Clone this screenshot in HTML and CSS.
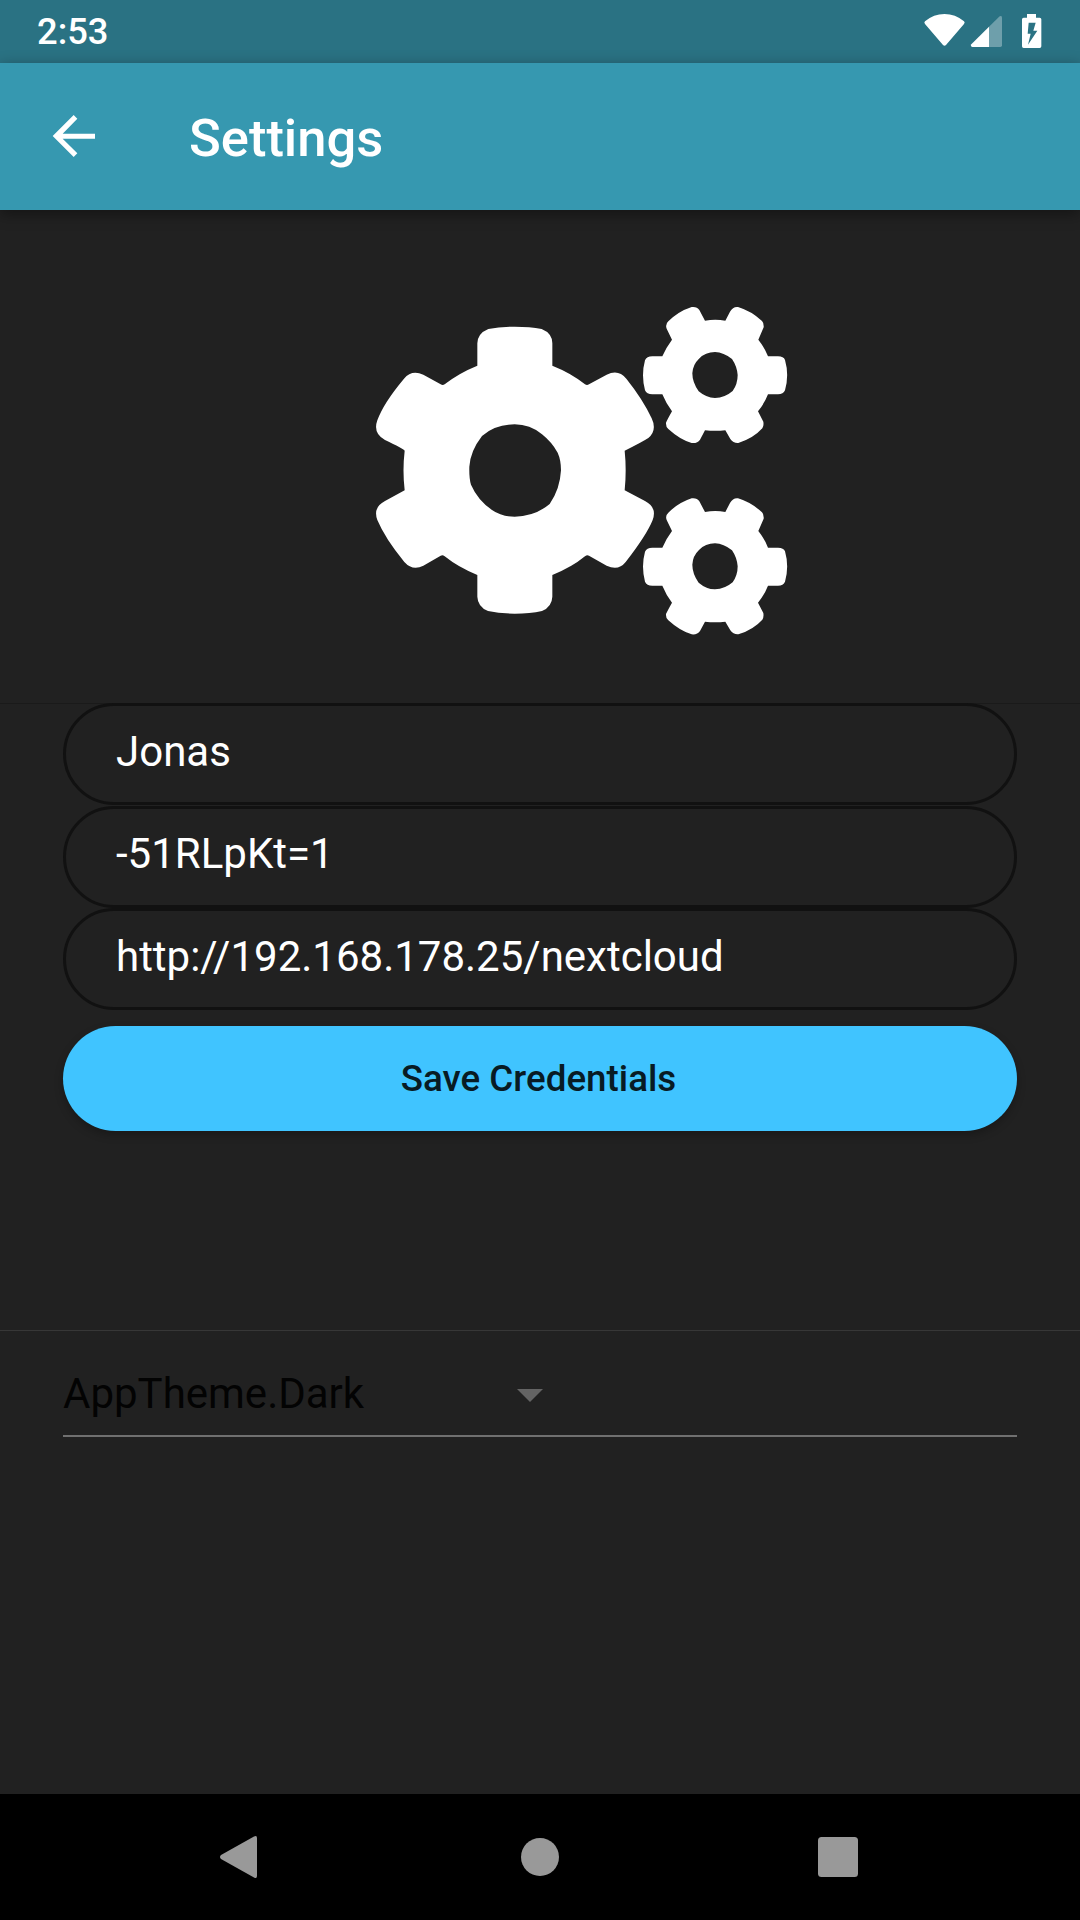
FILE: index.html
```html
<!DOCTYPE html>
<html lang="en">
<head>
<meta charset="utf-8">
<title>Settings</title>
<link rel="stylesheet" href="styles.css">
</head>
<body>
<div class="screen">
  <div class="status-bar">
    <span class="clock">2:53</span>
    <svg class="status-icons" viewBox="0 0 540 189" aria-hidden="true">
      <path fill="#fff" d="M75 64Q101 42 133.500 42Q166 42 192 64Q196 68 192 72L138 135Q133.500 140 129 135L75 72Q71 68 75 64Z"/>
      <path fill="#fff" fill-opacity=".32" d="M267 80L299 49Q306 45 306 53V136Q306 141 301 141H267Z"/>
      <path fill="#fff" d="M267 80V141H217Q210 139 214 133Z"/>
      <path fill="#fff" fill-rule="evenodd" d="M381 42H408V53H419Q424 53 424 58V139Q424 144 419 144H371Q366 144 366 139V58Q366 53 371 53H381ZM386 68L383 101H392L384 134L412 92H400L407 68Z"/>
    </svg>
  </div>
  <header class="app-bar">
    <svg class="back" viewBox="0 0 126 126" aria-hidden="true"><path fill="#fff" d="M126 56H29L73 11L62 0L-1 63L62 126L73 115L29 71H126Z"/></svg>
    <h1 class="title">Settings</h1>
  </header>
  <div class="hero">
    <svg class="gears" viewBox="0 0 1320 1080" aria-hidden="true">
      <path fill="#fff" fill-rule="evenodd" d="M352 227V160Q353 130 385 117Q420 110 464 110Q510 110 545 117Q577 130 577 160V227Q635 250 675 283Q681 287 687 283L740 254Q775 236 799 266Q850 330 875 385Q892 421 865 444Q845 457 794 482Q800 541 794 601L855 633Q892 652 878 690Q860 735 797 816Q775 844 740 827L687 797Q681 794 675 799Q635 832 577 855V920Q576 950 546 963Q510 971 464 971Q420 971 384 963Q353 950 352 920V855Q295 832 254 799Q248 793 242 797L190 827Q158 844 133 816Q75 745 52 690Q38 652 75 633L134 601Q127 541 134 482Q130 476 75 450Q38 430 52 391Q70 340 132 266Q155 238 190 254L242 283Q248 287 254 283Q295 250 352 227ZM366 438Q405 403 464 403Q510 403 546 433Q575 456 593 488Q603 510 603 541Q600 598 569 642Q525 679 464 680Q424 680 396 660Q353 630 333 584Q327 565 328 530Q331 483 366 438Z"/>
      <g id="small-gear">
        <path fill="#fff" fill-rule="evenodd" d="M1035 92Q1066 86 1096 92L1110 65Q1119 49 1134 51Q1174 63 1206 93Q1212 99 1211 112L1195 149Q1214 173 1224 199H1254Q1271 199 1275 210Q1288 255 1275 301Q1270 313 1254 313H1224Q1214 339 1194 364L1210 395Q1212 408 1207 415Q1180 445 1135 459Q1120 460 1111 447L1096 421Q1066 424 1035 421L1020 449Q1012 461 995 459Q960 449 925 417Q917 411 918 398Q922 389 936 364Q919 342 907 313H877Q860 313 855 301Q843 255 855 211Q860 199 877 199H907Q918 173 936 149L920 116Q915 103 925 94Q955 64 995 51Q1011 49 1018 60ZM1017 206Q1036 186 1065 186Q1091 187 1116 207Q1131 229 1133 255Q1133 282 1118 303Q1095 323 1065 324Q1038 323 1016 304Q997 277 997 250Q998 224 1017 206Z"/>
      </g>
      <use href="#small-gear" y="574"/>
    </svg>
  </div>
  <main class="form">
    <div class="field"><span class="value">Jonas</span></div>
    <div class="field"><span class="value">-51RLpKt=1</span></div>
    <div class="field"><span class="value">http://192.168.178.25/nextcloud</span></div>
    <button class="save">Save Credentials</button>
  </main>
  <section class="theme">
    <div class="select">
      <span class="choice">AppTheme.Dark</span>
      <svg class="caret" viewBox="0 0 26 13" aria-hidden="true"><path fill="#646464" d="M0 0H26L13 13Z"/></svg>
    </div>
  </section>
  <nav class="nav-bar">
    <svg class="nav-icon" viewBox="0 0 44 44" aria-hidden="true"><path fill="#999" d="M36 1.500Q39 0 39 3V41Q39 44 36 42.500L3 24Q1 22 3 20Z"/></svg>
    <svg class="nav-icon" viewBox="0 0 44 44" aria-hidden="true"><circle cx="22" cy="22" r="19" fill="#999"/></svg>
    <svg class="nav-icon" viewBox="0 0 44 44" aria-hidden="true"><rect x="0" y="2" width="40" height="40" rx="3.500" fill="#999"/></svg>
  </nav>
</div>
</body>
</html>
```
FILE: styles.css
```css
* { box-sizing: border-box; }
body { margin: 0; background: #212121; font-family: Roboto, sans-serif; color: #fff; }
.screen { width: 1080px; height: 1920px; display: flex; flex-direction: column; background: #212121; }
.status-bar { height: 63px; flex: none; display: flex; justify-content: space-between; background: #2a7283; }
.clock { padding-left: 37px; font-size: 36.3px; line-height: 63px; font-weight: 500; }
.status-icons { width: 180px; height: 63px; }
.app-bar { height: 147px; flex: none; display: flex; align-items: center; padding-left: 53px; gap: 94px; background: #3698b0; box-shadow: 0 4px 14px rgba(0, 0, 0, .4); }
.back { width: 42px; height: 42px; margin-bottom: 1px; overflow: visible; }
.title { margin: 0; font-size: 52.5px; line-height: 62px; font-weight: 500; padding-top: 3px; }
.hero { height: 494px; flex: none; padding: 80px 0 0 360px; border-bottom: 1px solid #1a1a1a; }
.gears { display: block; width: 440px; height: 360px; }
.form { height: 627px; flex: none; padding: 0 63px; margin-top: -1px; display: flex; flex-direction: column; gap: 0.6px; }
.field { height: 102px; flex: none; border: 3px solid #111; border-radius: 51px; padding-left: 50px; }
.value { display: block; font-size: 42px; line-height: 49px; padding-top: 20.7px; }
.save { height: 105px; flex: none; margin-top: 15px; padding: 0 3px 0 0; border: 0; border-radius: 52.5px; background: #40c4ff; color: #081b24; font: 500 36.75px/43px Roboto, sans-serif; box-shadow: 0 4px 8px rgba(0, 0, 0, .25); }
.theme { flex: 1; border-top: 1px solid #373737; padding: 35px 63px 0; }
.select { height: 71px; display: flex; border-bottom: 2px solid #707070; }
.choice { width: 454px; color: #030303; font-size: 42px; line-height: 56px; }
.caret { width: 26px; height: 13px; margin-top: 23px; }
.nav-bar { height: 126px; flex: none; display: flex; justify-content: space-between; align-items: center; padding: 0 218px; background: #000; }
.nav-icon { width: 44px; height: 44px; }
```
